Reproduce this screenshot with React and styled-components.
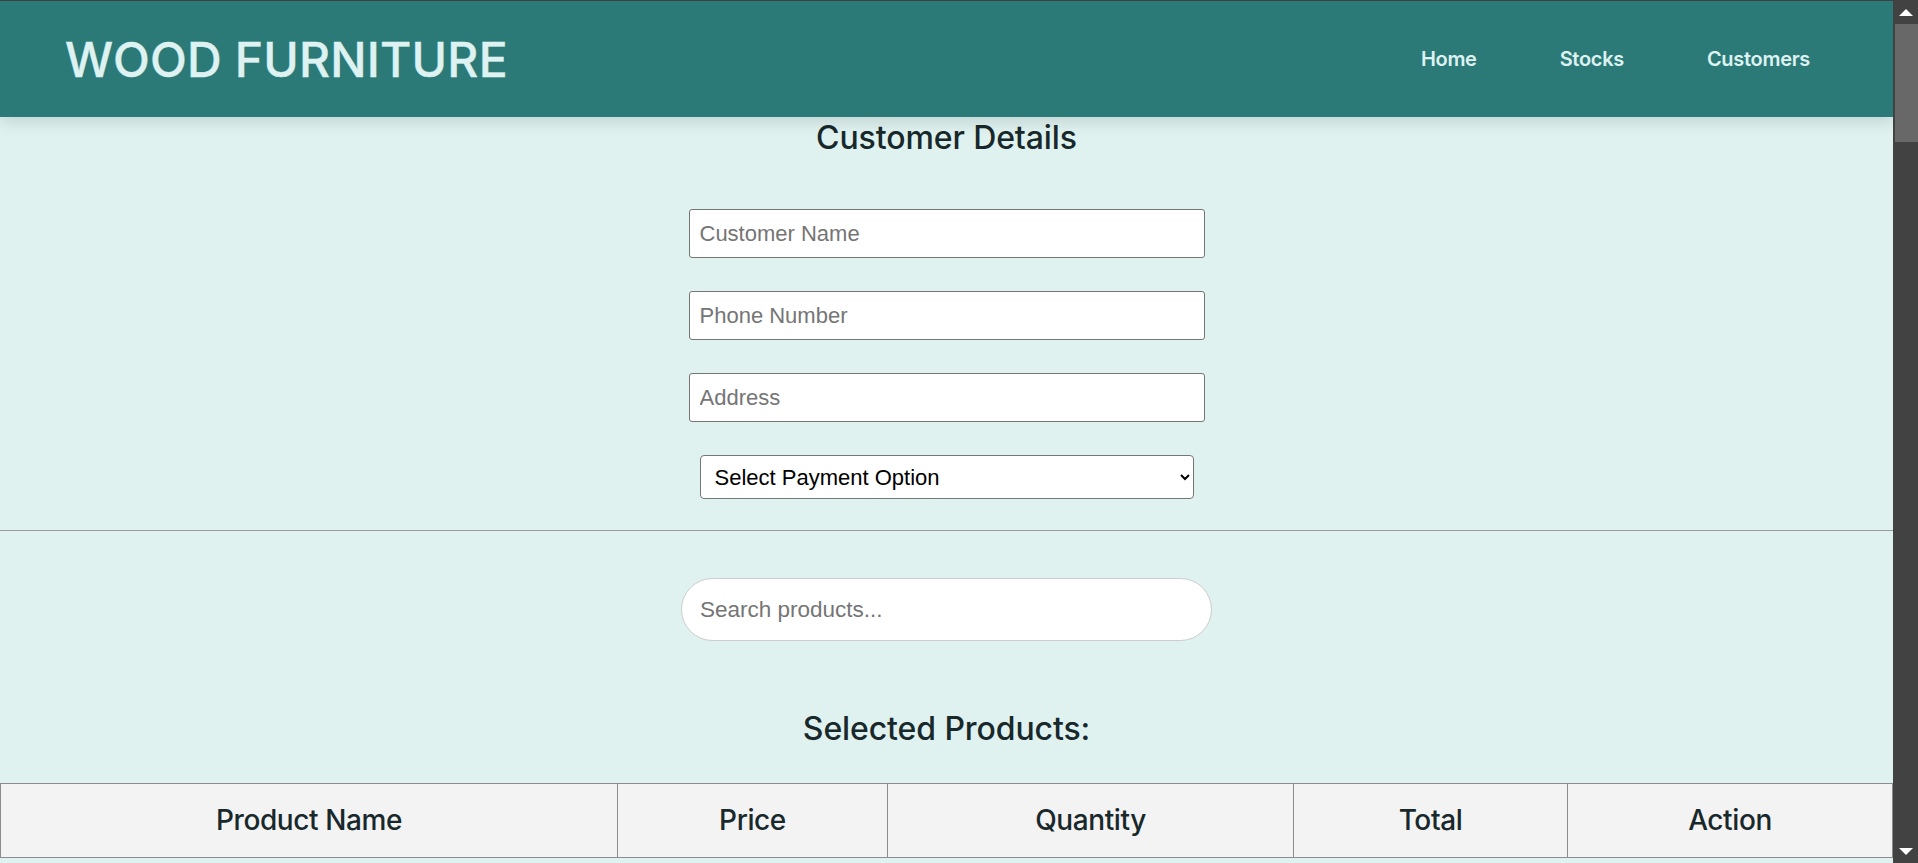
import styled, { createGlobalStyle } from "styled-components";

const GlobalStyle = createGlobalStyle`
  * {
    box-sizing: border-box;
  }

  body {
    margin: 0;
    background: #dff2f0;
    font-family: "Inter", "Liberation Sans", sans-serif;
  }
`;

const Page = styled.div`
  width: calc(100% - 25px);
  min-height: 6000px;
  background: #dff2f0;
`;

// window scrollbar, pinned over the right edge
const ScrollRail = styled.div`
  position: fixed;
  top: 0;
  right: 0;
  z-index: 5;
  display: flex;
  flex-direction: column;
  align-items: stretch;
  width: 25px;
  height: 100vh;
  background: #424242;
`;

const ScrollButton = styled.div`
  display: flex;
  justify-content: center;
  align-items: center;
  height: 24px;
  flex-shrink: 0;
`;

const ScrollThumb = styled.div`
  height: 118px;
  margin-left: 2px;
  background: #686868;
`;

const ScrollSpace = styled.div`
  flex: 1;
`;

const Navbar = styled.header`
  position: relative;
  z-index: 1;
  display: flex;
  justify-content: space-between;
  align-items: center;
  height: 117px;
  border-top: 1px solid #3f3f3f;
  padding: 0 83px 0 65px;
  background: #2c7a78;
  box-shadow: 0 4px 16px rgba(0, 0, 0, 0.14);
`;

const Brand = styled.h1`
  margin: 0;
  font-size: 48px;
  font-weight: 500;
  letter-spacing: 0.2px;
  color: #ddf2f1;
  text-transform: uppercase;
  -webkit-text-stroke: 0.4px #ddf2f1;
`;

const NavLinks = styled.nav`
  display: flex;
  align-items: center;
  gap: 83px;
`;

const NavLink = styled.a`
  font-size: 20px;
  font-weight: 600;
  letter-spacing: -0.3px;
  color: #ddf2f1;
  text-decoration: none;
  cursor: pointer;
`;

const SectionTitle = styled.h2`
  margin: ${(props) => props.$margin};
  font-size: 32px;
  font-weight: 500;
  letter-spacing: -0.1px;
  line-height: 1.2;
  text-align: center;
  color: #18282b;
`;

const CustomerForm = styled.section`
  display: flex;
  flex-direction: column;
  align-items: center;
  padding-bottom: 31px;
`;

const Fields = styled.div`
  display: flex;
  flex-direction: column;
  align-items: center;
  gap: 33px;
`;

const TextInput = styled.input`
  width: 516px;
  height: 49px;
  padding: 0 10px;
  border: 1px solid #767676;
  border-radius: 3px;
  background: #fff;
  font-family: "Liberation Sans", Arial, sans-serif;
  font-size: 22px;
  color: #111;

  &::placeholder {
    color: #757575;
  }
`;

const PaymentSelect = styled.select`
  width: 494px;
  height: 44px;
  padding: 0 8px 0 10px;
  border: 1px solid #767676;
  border-radius: 4px;
  background: #fff;
  font-family: "Liberation Sans", Arial, sans-serif;
  font-size: 22px;
  color: #000;
`;

const Divider = styled.hr`
  margin: 0;
  border: 0;
  border-top: 1px solid #9a9a9a;
`;

const SearchBar = styled.div`
  display: flex;
  justify-content: center;
  padding: 47px 0 69px;
`;

const SearchInput = styled.input`
  width: 531px;
  height: 63px;
  padding: 0 18px;
  border: 1px solid #cccccc;
  border-radius: 32px;
  background: #fff;
  font-family: "Liberation Sans", Arial, sans-serif;
  font-size: 22.5px;
  outline: none;

  &::placeholder {
    color: #757575;
  }
`;

const ProductTable = styled.table`
  width: 100%;
  border-collapse: collapse;
  border: 1px solid #777;
  background: #f3f3f3;
`;

const Th = styled.th`
  width: ${(props) => props.$width}px;
  height: 74px;
  padding: 0 8px;
  border: 1px solid #8c8c8c;
  font-size: 28px;
  font-weight: 500;
  letter-spacing: -0.4px;
  color: #18282b;
  text-align: center;
`;

const columns = [
  { label: "Product Name", width: 617 },
  { label: "Price", width: 270 },
  { label: "Quantity", width: 406 },
  { label: "Total", width: 274 },
  { label: "Action", width: 325 },
];

function Arrow({ down }) {
  return (
    <svg width="14" height="7" viewBox="0 0 14 7">
      <polygon points={down ? "0,0 14,0 7,7" : "7,0 14,7 0,7"} fill="#fff" />
    </svg>
  );
}

export default function App() {
  return (
    <Page>
      <GlobalStyle />
      <Navbar>
        <Brand>Wood Furniture</Brand>
        <NavLinks>
          <NavLink>Home</NavLink>
          <NavLink>Stocks</NavLink>
          <NavLink>Customers</NavLink>
        </NavLinks>
      </Navbar>

      <main>
        <CustomerForm>
          <SectionTitle $margin="2px 0 52px">Customer Details</SectionTitle>
          <Fields>
            <TextInput type="text" placeholder="Customer Name" />
            <TextInput type="text" placeholder="Phone Number" />
            <TextInput type="text" placeholder="Address" />
            <PaymentSelect defaultValue="">
              <option value="">Select Payment Option</option>
              <option value="cash">Cash</option>
              <option value="card">Card</option>
              <option value="upi">UPI</option>
            </PaymentSelect>
          </Fields>
        </CustomerForm>

        <Divider />

        <SearchBar>
          <SearchInput type="text" placeholder="Search products..." />
        </SearchBar>

        <SectionTitle $margin="0 0 34px">Selected Products:</SectionTitle>
        <ProductTable>
          <thead>
            <tr>
              {columns.map((col) => (
                <Th key={col.label} $width={col.width}>
                  {col.label}
                </Th>
              ))}
            </tr>
          </thead>
          <tbody />
        </ProductTable>
      </main>

      <ScrollRail>
        <ScrollButton>
          <Arrow />
        </ScrollButton>
        <ScrollThumb />
        <ScrollSpace />
        <ScrollButton>
          <Arrow down />
        </ScrollButton>
      </ScrollRail>
    </Page>
  );
}
